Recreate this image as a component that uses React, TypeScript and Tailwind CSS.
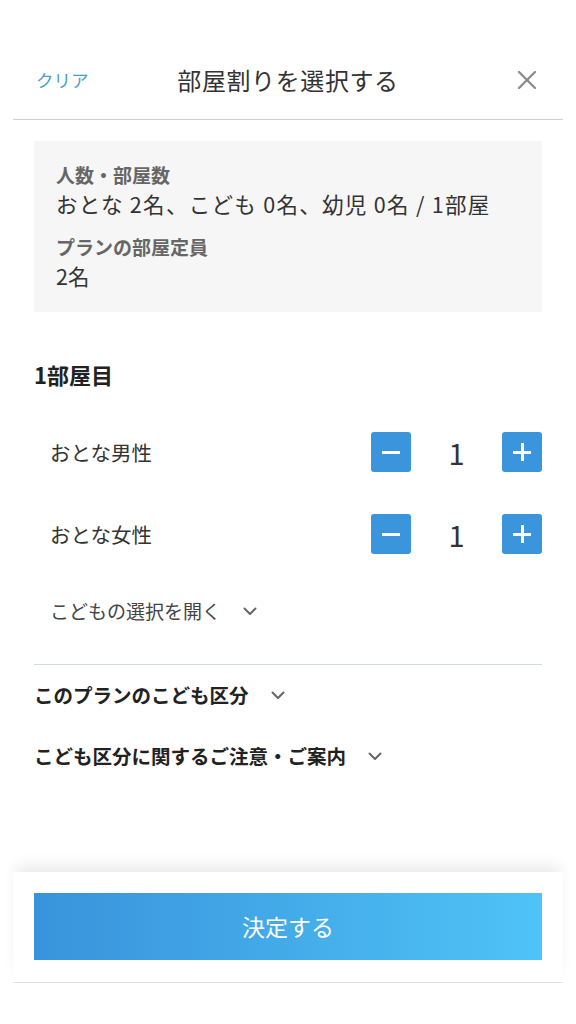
import { X } from 'lucide-react';

const font = { fontFamily: '"Noto Sans CJK JP", "Noto Sans", sans-serif' };

function Chevron() {
  return (
    <svg width="14" height="9" viewBox="0 0 14 9" fill="none" className="text-[#666]" aria-hidden="true">
      <polyline points="1.5,1.5 7,7 12.5,1.5" stroke="currentColor" strokeWidth="2" strokeLinecap="round" strokeLinejoin="round" />
    </svg>
  );
}

function Stepper({ value }: { value: number }) {
  return (
    <div className="flex items-center">
      <button
        type="button"
        className="flex h-10 w-10 items-center justify-center rounded-[3px] bg-[#3a95dc]"
        aria-label="減らす"
      >
        <span className="block h-[3px] w-[18px] bg-white" />
      </button>
      <span className="w-[91px] text-center text-[29px] leading-none text-[#333]">{value}</span>
      <button
        type="button"
        className="relative flex h-10 w-10 items-center justify-center rounded-[3px] bg-[#3a95dc]"
        aria-label="増やす"
      >
        <span className="block h-[3px] w-[18px] bg-white" />
        <span className="absolute h-[18px] w-[3px] bg-white" />
      </button>
    </div>
  );
}

function GuestRow({ label, value }: { label: string; value: number }) {
  return (
    <div className="flex h-10 items-center justify-between pl-4">
      <span className="text-[20.5px] text-[#333]">{label}</span>
      <Stepper value={value} />
    </div>
  );
}

function Toggle({ label, bold }: { label: string; bold?: boolean }) {
  return (
    <button type="button" className="flex items-center gap-[22px] text-left">
      <span className={bold ? 'text-[19.5px] font-bold text-[#222]' : 'text-[19px] text-[#444]'}>
        {label}
      </span>
      <Chevron />
    </button>
  );
}

export default function App() {
  return (
    <div className="flex h-[1024px] flex-col bg-white" style={font}>
      <header className="mx-[13px] flex h-[120px] items-end border-b border-[#cfcfcf] pb-[15px]">
        <div className="relative flex h-12 w-full items-center justify-center">
          <button type="button" className="absolute left-[23px] text-[17.5px] text-[#4a9fc8]">
            クリア
          </button>
          <h1 className="text-[24px] tracking-[0.6px] text-[#333]">部屋割りを選択する</h1>
          <button type="button" className="absolute right-[20px] text-[#8a8a8a]" aria-label="閉じる">
            <X size={32} strokeWidth={1.7} />
          </button>
        </div>
      </header>

      <main className="px-[34px]">
        <section className="mt-[21px] bg-[#f6f6f6] px-[22px] pt-[20px] pb-[22px]">
          <p className="text-[19px] font-bold leading-[28px] text-[#666]">人数・部屋数</p>
          <p className="text-[21.5px] leading-[30px] tracking-[1.3px] text-[#333]">
            おとな 2名、こども 0名、幼児 0名 / 1部屋
          </p>
          <p className="mt-[13px] text-[19px] font-bold leading-[29px] text-[#666]">プランの部屋定員</p>
          <p className="text-[21.5px] leading-[29px] text-[#333]">2名</p>
        </section>

        <h2 className="mt-[47px] text-[22px] font-bold leading-[31px] text-[#222]">1部屋目</h2>

        <div className="mt-[42px] flex flex-col gap-[42px]">
          <GuestRow label="おとな男性" value={1} />
          <GuestRow label="おとな女性" value={1} />
        </div>

        <div className="mt-[43px] flex h-[28px] items-center pl-4">
          <Toggle label="こどもの選択を開く" />
        </div>

        <div className="mt-[39px] border-t border-[#d4dbde]" />

        <div className="mt-[16px] flex flex-col gap-[33px]">
          <div className="flex h-[28px] items-center">
            <Toggle label="このプランのこども区分" bold />
          </div>
          <div className="flex h-[28px] items-center">
            <Toggle label="こども区分に関するご注意・ご案内" bold />
          </div>
        </div>
      </main>

      <div className="flex-1" />

      <footer className="mx-[13px] border-b border-[#e2e2e2] bg-white px-[21px] pt-[21px] pb-[22px] shadow-[0_-10px_14px_-4px_rgba(0,0,0,0.09)]">
        <button
          type="button"
          className="flex h-[67px] w-full items-center justify-center bg-gradient-to-r from-[#3993db] to-[#4fc3f7] text-[23px] text-white"
        >
          決定する
        </button>
      </footer>
      <div className="h-[41px]" />
    </div>
  );
}
